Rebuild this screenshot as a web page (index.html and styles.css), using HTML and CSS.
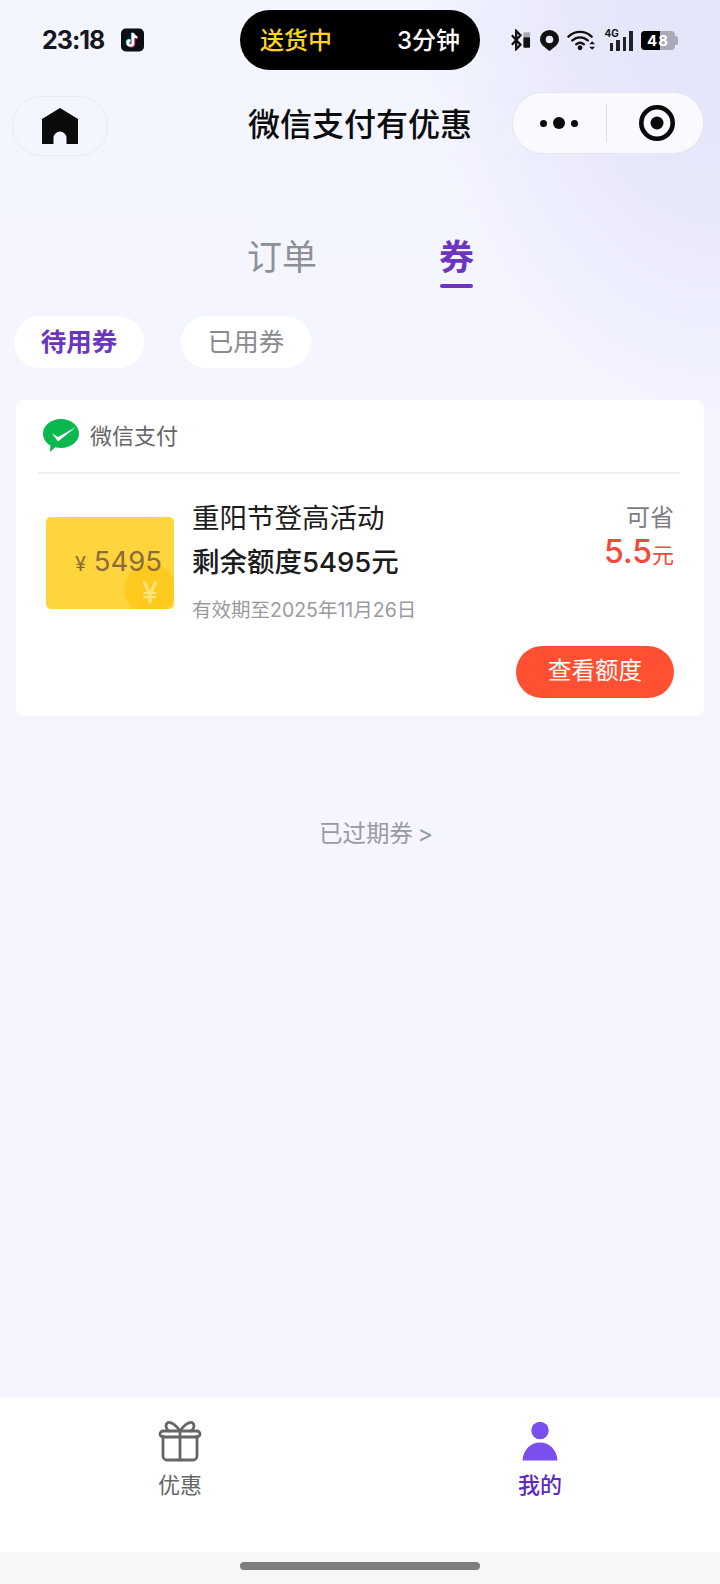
FILE: index.html
```html
<!DOCTYPE html>
<html lang="zh-CN">
<head>
  <meta charset="UTF-8">
  <title>微信支付有优惠</title>
  <meta name="viewport" content="width=device-width, initial-scale=1.0">
  <link rel="stylesheet" href="styles.css">
</head>
<body>
  <div class="page">
    <!-- Status bar -->
    <div class="status-bar">
      <div class="status-left">
        <span class="status-time">23:18</span>
        <svg class="tiktok" viewBox="0 0 24 24">
          <rect width="24" height="24" rx="5" fill="#0d0d14"/>
          <path d="M12.6 5v10.2a2.7 2.7 0 1 1-2.7-2.7M12.6 5c.3 2.4 1.8 3.9 4.2 4.2" fill="none" stroke="#2ee6e6" stroke-width="2.4" transform="translate(-1 -.6)"/>
          <path d="M12.6 5v10.2a2.7 2.7 0 1 1-2.7-2.7M12.6 5c.3 2.4 1.8 3.9 4.2 4.2" fill="none" stroke="#f0305a" stroke-width="2.4" transform="translate(1 .6)"/>
          <path d="M12.6 5v10.2a2.7 2.7 0 1 1-2.7-2.7M12.6 5c.3 2.4 1.8 3.9 4.2 4.2" fill="none" stroke="#fff" stroke-width="2.4"/>
        </svg>
      </div>
      <div class="island">
        <span class="island-state">送货中</span>
        <span class="island-time">3分钟</span>
      </div>
      <div class="status-right">
        <svg class="ic-bt" viewBox="0 0 22 22">
          <path d="M2 6l9 10-4.5 4.5V1.500L11 6l-9 10" fill="none" stroke="#111" stroke-width="2.4"/>
          <rect x="14" y="3" width="7" height="5" fill="#a9a9b4"/>
          <rect x="14" y="8" width="7" height="11" rx="1" fill="#111"/>
        </svg>
        <svg class="ic-pin" viewBox="0 0 20 22">
          <path fill-rule="evenodd" d="M10 0a10 10 0 0 1 10 10c0 4.600-5 8.600-10 12C5 18.600 0 14.600 0 10A10 10 0 0 1 10 0zm0 6a4 4 0 1 0 0 8 4 4 0 0 0 0-8z" fill="#111"/>
        </svg>
        <svg class="ic-wifi" viewBox="0 0 30 22">
          <path d="M1.5 7.500c7-6.500 17-6.500 24 0M5.500 11.500c4.800-4.300 11.200-4.300 16 0M9.500 15.500c2.600-2.200 5.400-2.200 8 0" fill="none" stroke="#111" stroke-width="2.4" stroke-linecap="round"/>
          <circle cx="13.500" cy="19" r="2.500" fill="#111"/>
          <path d="M23 15.500h6l-3-3.200zM23 18h6l-3 3.200z" fill="#111"/>
        </svg>
        <div class="signal">
          <span class="signal-tag">4G</span>
          <i class="bar b1"></i><i class="bar b2"></i><i class="bar b3"></i><i class="bar b4"></i>
        </div>
        <div class="battery"><span class="battery-fill"></span><span class="battery-num">48</span><span class="battery-cap"></span></div>
      </div>
    </div>

    <!-- Mini program nav -->
    <div class="nav">
      <div class="home-btn">
        <svg class="ic-home" viewBox="0 0 36 36">
          <path d="M18 0L36 11V36H24.5V30a6.5 6.5 0 0 0-13 0V36H0V11z" fill="#0a0a0a"/>
        </svg>
      </div>
      <div class="nav-title">微信支付有优惠</div>
      <div class="capsule">
        <div class="capsule-cell">
          <span class="dot"></span><span class="dot dot-big"></span><span class="dot"></span>
        </div>
        <div class="capsule-line"></div>
        <div class="capsule-cell capsule-cell-right">
          <svg class="ic-target" viewBox="0 0 36 36">
            <circle cx="18" cy="18" r="15.7" fill="none" stroke="#0a0a0a" stroke-width="4.6"/>
            <circle cx="18" cy="18" r="6.5" fill="#0a0a0a"/>
          </svg>
        </div>
      </div>
    </div>

    <main class="content">
      <div class="tabs">
        <div class="tab">订单</div>
        <div class="tab tab-active">券</div>
      </div>

      <div class="filters">
        <div class="filter filter-active">待用券</div>
        <div class="filter">已用券</div>
      </div>

      <div class="coupon-card">
        <div class="coupon-head">
          <svg class="ic-wechat" viewBox="0 0 36 34">
            <path d="M18 0C28 0 36 6.500 36 14.500S28 29 18 29c-2 0-4-.3-5.800-.8L7 33l.4-6.500C3 24 0 19.500 0 14.500 0 6.500 8 0 18 0z" fill="#0bb84f"/>
            <path d="M9 14.500l6 3.500L33 8 15 22.500z" fill="#fff"/>
          </svg>
          <span class="coupon-brand">微信支付</span>
        </div>
        <div class="coupon-body">
          <div class="ticket">
            <span class="ticket-amount"><small>¥</small> 5495</span>
            <span class="ticket-coin">¥</span>
          </div>
          <div class="coupon-info">
            <div class="coupon-name">重阳节登高活动</div>
            <div class="coupon-left">剩余额度5495元</div>
            <div class="coupon-date">有效期至2025年11月26日</div>
          </div>
          <div class="coupon-save">
            <div class="save-label">可省</div>
            <div class="save-value">5.5<small>元</small></div>
          </div>
        </div>
        <div class="coupon-foot">
          <div class="btn-quota">查看额度</div>
        </div>
      </div>

      <div class="expired">已过期券 &gt;</div>
    </main>

    <!-- Tab bar -->
    <div class="tabbar">
      <div class="tabbar-item">
        <svg class="ic-tab" viewBox="0 0 44 42">
          <path d="M5 15v21a4 4 0 0 0 4 4h26a4 4 0 0 0 4-4V15M22 11v29M5 11h34a3 3 0 0 1 3 3v0a3 3 0 0 1-3 3H5a3 3 0 0 1-3-3v0a3 3 0 0 1 3-3z" fill="none" stroke="#666" stroke-width="2.8" stroke-linejoin="round"/>
          <path d="M22 11C18 5 13 1.500 10 2.500 7 4 7.500 9 11 11M22 11c4-6 9-9.500 12-8.500 3 1.500 2.500 6.500-1 8.500" fill="none" stroke="#666" stroke-width="2.8" stroke-linecap="round"/>
        </svg>
        <span class="tabbar-label">优惠</span>
      </div>
      <div class="tabbar-item tabbar-active">
        <svg class="ic-tab" viewBox="0 0 44 42">
          <circle cx="22" cy="10.500" r="8.700" fill="#7a4ff0"/>
          <path d="M4.500 40.500C5 30 12.500 22.500 22 22.500S39 30 39.500 40.500z" fill="#7a4ff0"/>
        </svg>
        <span class="tabbar-label">我的</span>
      </div>
    </div>

    <div class="home-indicator"><span class="home-bar"></span></div>
  </div>
</body>
</html>
```

FILE: styles.css
```css
html, body {
  margin: 0;
  padding: 0;
}
body {
  font-family: Inter, "Noto Sans CJK SC", sans-serif;
  color: #111;
}
.page {
  width: 720px;
  height: 1584px;
  display: flex;
  flex-direction: column;
  overflow: hidden;
  background:
    radial-gradient(300px 430px at 100% 0%, #e4e4fa 0%, #e8e8fb 50%, #f4f5ff00 100%),
    linear-gradient(180deg, #f3f5ff 0%, #f6f5ff 100%);
}

/* status bar */
.status-bar {
  height: 80px;
  box-sizing: border-box;
  padding: 10px 42px 0 42px;
  display: flex;
  justify-content: space-between;
  align-items: flex-start;
}
.status-left {
  width: 198px;
  height: 60px;
  display: flex;
  align-items: center;
  gap: 17px;
}
.status-time {
  font-size: 25px;
  font-weight: 700;
  letter-spacing: -1px;
  color: #16161e;
}
.tiktok {
  width: 23px;
  height: 24px;
}
.island {
  width: 240px;
  height: 60px;
  box-sizing: border-box;
  padding: 0 20px 4px 20px;
  background: #000;
  border-radius: 30px;
  display: flex;
  justify-content: space-between;
  align-items: center;
  font-size: 24px;
  font-weight: 500;
}
.island-state { color: #ffd21f; }
.island-time { color: #fff; }
.status-right {
  height: 60px;
  display: flex;
  align-items: center;
  margin-left: 30px;
  flex: 1;
  justify-content: space-between;
}
.ic-bt { width: 21px; height: 22px; }
.ic-pin { width: 19px; height: 21px; }
.ic-wifi { width: 29px; height: 22px; }
.signal {
  position: relative;
  width: 28px;
  height: 21px;
  display: flex;
  align-items: flex-end;
  justify-content: flex-end;
  gap: 3px;
}
.signal-tag {
  position: absolute;
  left: 0;
  top: -2px;
  font-size: 10px;
  font-weight: 700;
  line-height: 11px;
}
.bar {
  display: block;
  width: 3.5px;
  background: #222;
}
.b1 { height: 8px; }
.b2 { height: 11px; }
.b3 { height: 14px; }
.b4 { height: 20px; }
.battery {
  position: relative;
  width: 34px;
  height: 19px;
  margin-right: 3px;
  background: #a9a9ba;
  border-radius: 4px;
  display: flex;
  align-items: center;
  justify-content: center;
}
.battery-fill {
  position: absolute;
  left: 0;
  top: 0;
  bottom: 0;
  width: 19px;
  background: #000;
  border-radius: 4px 0 0 4px;
}
.battery-num {
  position: relative;
  color: #fff;
  font-size: 15px;
  font-weight: 700;
  letter-spacing: 1px;
}
.battery-cap {
  position: absolute;
  right: -3px;
  top: 5px;
  width: 3px;
  height: 9px;
  background: #a9a9ba;
  border-radius: 0 2px 2px 0;
}

/* nav */
.nav {
  height: 90px;
  box-sizing: border-box;
  padding: 12px 12px 0 12px;
  display: grid;
  grid-template-columns: 1fr auto 1fr;
  align-items: start;
}
.home-btn {
  width: 96px;
  height: 60px;
  margin-top: 4px;
  box-sizing: border-box;
  border: 1px solid #e9ebf5;
  border-radius: 30px;
  display: flex;
  align-items: center;
  justify-content: center;
}
.ic-home { width: 36px; height: 36px; }
.nav-title {
  margin-top: 10px;
  font-size: 32px;
  line-height: 46px;
  font-weight: 500;
  color: #0c0c0c;
}
.capsule {
  justify-self: end;
  width: 192px;
  height: 62px;
  margin-right: 4px;
  box-sizing: border-box;
  border: 1px solid #e6e6f2;
  border-radius: 31px;
  background: #f9f9ff;
  display: flex;
  align-items: center;
}
.capsule-cell {
  flex: 1;
  display: flex;
  align-items: center;
  justify-content: center;
  gap: 6px;
}
.capsule-cell-right {
  padding-left: 4px;
}
.capsule-line {
  width: 1px;
  height: 38px;
  background: #dcdce6;
}
.dot {
  width: 7px;
  height: 7px;
  border-radius: 50%;
  background: #0a0a0a;
}
.dot-big {
  width: 12px;
  height: 12px;
}
.ic-target { width: 36px; height: 36px; }

/* content */
.content {
  flex: 1;
  padding: 0 16px;
}
.tabs {
  display: flex;
  padding: 62px 0 0 231px;
  gap: 122px;
}
.tab {
  font-size: 35px;
  line-height: 51px;
  padding-bottom: 1px;
  color: #8f8f96;
  border-bottom: 4px solid transparent;
}
.tab-active {
  color: #6b35c0;
  font-weight: 700;
  border-bottom: 0;
}
.tab-active::after {
  content: "";
  display: block;
  height: 4px;
  margin: 1px 1px 0;
  border-radius: 2px;
  background: #6b35c0;
}
.filters {
  display: flex;
  gap: 37px;
  margin: 27px 0 32px -2px;
}
.filter {
  width: 130px;
  height: 52px;
  box-sizing: border-box;
  padding-bottom: 5px;
  border-radius: 26px;
  background: #fff;
  display: flex;
  align-items: center;
  justify-content: center;
  font-size: 25.5px;
  color: #8a8a90;
}
.filter-active {
  color: #6b35c0;
  font-weight: 700;
}
.coupon-card {
  width: 688px;
  height: 316px;
  box-sizing: border-box;
  padding: 0 24px 0 22px;
  border-radius: 8px;
  background: #fff;
}
.coupon-head {
  height: 74px;
  box-sizing: border-box;
  padding-left: 5px;
  border-bottom: 2px solid #eeeef3;
  display: flex;
  align-items: center;
  gap: 11px;
}
.ic-wechat { width: 36px; height: 34px; }
.coupon-brand {
  padding-bottom: 4px;
  font-size: 22px;
  color: #666;
}
.coupon-body {
  display: flex;
  align-items: flex-start;
  padding: 24px 6px 0 8px;
  height: 172px;
  box-sizing: border-box;
}
.ticket {
  position: relative;
  width: 128px;
  height: 92px;
  margin-top: 19px;
  border-radius: 5px;
  background: radial-gradient(circle 26px at 104px 72px, #ffc91f 98%, #ffc91f00 100%), #ffd53e;
  box-sizing: border-box;
  padding: 27px 12px 0 0;
  text-align: right;
  color: #8d6b3c;
  font-size: 27.5px;
  line-height: 34px;
}
.ticket-amount small {
  font-size: 20px;
}
.ticket-coin {
  position: absolute;
  right: 9px;
  bottom: 5px;
  width: 30px;
  color: #ffe27a;
  font-size: 30px;
  font-weight: 500;
  line-height: 24px;
  text-align: center;
}
.coupon-info {
  flex: 1;
  margin-left: 18px;
}
.coupon-name {
  font-size: 27.5px;
  line-height: 40px;
  color: #1c1c1c;
}
.coupon-left {
  font-size: 27.5px;
  line-height: 48px;
  font-weight: 500;
  color: #1c1c1c;
}
.coupon-date {
  margin-top: 10px;
  font-size: 19.5px;
  line-height: 28px;
  color: #9a9a9f;
}
.coupon-save {
  margin-top: 5px;
  text-align: right;
}
.save-label {
  font-size: 24px;
  line-height: 30px;
  color: #7c7c80;
}
.save-value {
  font-size: 32px;
  line-height: 38px;
  font-weight: 500;
  color: #f5483b;
}
.save-value small {
  font-size: 22px;
  font-weight: 400;
}
.coupon-foot {
  display: flex;
  justify-content: flex-end;
  padding-right: 6px;
}
.btn-quota {
  width: 158px;
  height: 52px;
  box-sizing: border-box;
  padding-bottom: 6px;
  border-radius: 26px;
  background: #ff5034;
  color: #fff;
  font-size: 23.5px;
  display: flex;
  align-items: center;
  justify-content: center;
}
.expired {
  margin-top: 101px;
  padding-left: 32px;
  text-align: center;
  font-size: 23.5px;
  word-spacing: -2px;
  line-height: 34px;
  color: #9a9a9f;
}

/* tab bar */
.tabbar {
  height: 154px;
  background: #fff;
  display: flex;
}
.tabbar-item {
  flex: 1;
  display: flex;
  flex-direction: column;
  align-items: center;
  padding-top: 22px;
  box-sizing: border-box;
}
.ic-tab {
  width: 44px;
  height: 42px;
}
.tabbar-label {
  margin-top: 7px;
  font-size: 22px;
  line-height: 32px;
  color: #666;
}
.tabbar-active .tabbar-label {
  color: #5f27c8;
  font-weight: 500;
}
.home-indicator {
  height: 32px;
  background: #f7f7f7;
  display: flex;
  justify-content: center;
  padding-top: 10px;
  box-sizing: border-box;
}
.home-bar {
  width: 240px;
  height: 8px;
  border-radius: 4px;
  background: #7f7f7f;
}
```
